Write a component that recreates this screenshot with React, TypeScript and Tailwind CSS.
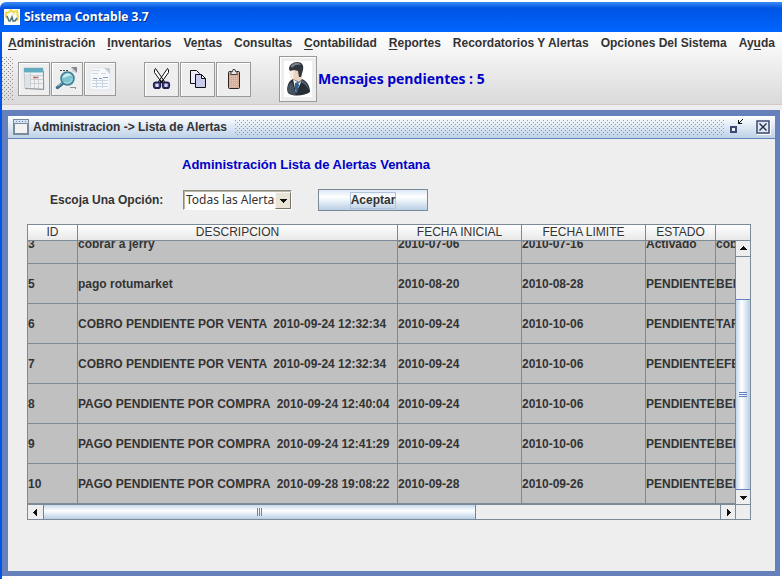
import type { ReactNode } from 'react'

const MENUS: [string, string, string][] = [
  ['', 'A', 'dministración'],
  ['', 'I', 'nventarios'],
  ['Ve', 'n', 'tas'],
  ['Consultas', '', ''],
  ['', 'C', 'ontabilidad'],
  ['', 'R', 'eportes'],
  ['Recordatorios Y Alertas', '', ''],
  ['Opciones Del Sistema', '', ''],
  ['Ay', 'u', 'da'],
]

const ROWS = [
  ['3', 'cobrar a jerry', '2010-07-06', '2010-07-16', 'Activado', 'cobro'],
  ['5', 'pago rotumarket', '2010-08-20', '2010-08-28', 'PENDIENTE', 'BENEF'],
  ['6', 'COBRO PENDIENTE POR VENTA  2010-09-24 12:32:34', '2010-09-24', '2010-10-06', 'PENDIENTE', 'TARJ'],
  ['7', 'COBRO PENDIENTE POR VENTA  2010-09-24 12:32:34', '2010-09-24', '2010-10-06', 'PENDIENTE', 'EFEC'],
  ['8', 'PAGO PENDIENTE POR COMPRA  2010-09-24 12:40:04', '2010-09-24', '2010-10-06', 'PENDIENTE', 'BENEF'],
  ['9', 'PAGO PENDIENTE POR COMPRA  2010-09-24 12:41:29', '2010-09-24', '2010-10-06', 'PENDIENTE', 'BENEF'],
  ['10', 'PAGO PENDIENTE POR COMPRA  2010-09-28 19:08:22', '2010-09-28', '2010-09-26', 'PENDIENTE', 'BENEF'],
]

function Dots({ id, color, className }: { id: string; color: string; className: string }) {
  return (
    <svg className={className} aria-hidden="true" shapeRendering="crispEdges">
      <defs>
        <pattern id={id} width="4" height="4" patternUnits="userSpaceOnUse">
          <rect width="1" height="1" fill={color} />
          <rect x="2" y="2" width="1" height="1" fill={color} />
        </pattern>
      </defs>
      <rect width="100%" height="100%" fill={`url(#${id})`} />
    </svg>
  )
}

function ToolButton({ label, size, children }: { label: string; size: 'small' | 'medium' | 'large'; children: ReactNode }) {
  const sizes = {
    small: 'h-[34px] w-8',
    medium: 'h-[35px] w-[35px]',
    large: 'h-[46px] w-[38px]',
  }
  return (
    <button
      type="button"
      aria-label={label}
      className={`flex shrink-0 items-center justify-center border border-[#999] bg-[#eee] shadow-[inset_1px_1px_0_#fff] ${sizes[size]}`}
    >
      {children}
    </button>
  )
}

function CalendarIcon() {
  return (
    <svg width="22" height="24" viewBox="0 0 22 24">
      <path d="M1 1l19 0 1 21-19-1z" fill="#eff1f2" stroke="#b4bbbf" strokeWidth="0.800" />
      <path d="M1 1h19v4H1z" fill="#62abc2" />
      <path d="M1 5h19v1H1z" fill="#a8d3df" />
      <path d="M2 7h5v13H2z" fill="#dde3e6" />
      <path d="M7.500 6v14M11.500 8v13M15.500 8v13M8 8.500h12M8 12.500h12M8 16.500h12" stroke="#c9cfd2" />
      <path d="M10 10.500h5" stroke="#d4604e" strokeWidth="1.500" />
      <path d="M2 21.500l19 1M20.500 4v18" stroke="#8f979b" />
    </svg>
  )
}

function SearchDocIcon() {
  return (
    <svg width="24" height="26" viewBox="0 0 24 26">
      <path d="M4 2h13l5 5v17H4z" fill="#eceff1" />
      <path d="M16 1h6v6z" fill="#84888b" />
      <path d="M16 1l1 5 5 1z" fill="#d4d8da" />
      <path d="M5 4.500h9" stroke="#3c4347" strokeDasharray="2 1" />
      <path d="M15 21.500h5M20.500 21v2" stroke="#8b9296" />
      <path d="M7.500 17.500l-5 4" stroke="#3b6f8a" strokeWidth="3.500" strokeLinecap="round" />
      <path d="M7 17l-4 3" stroke="#8fc0d3" strokeLinecap="round" />
      <circle cx="12.500" cy="12.500" r="6.500" fill="#7cc3d0" stroke="#467d91" strokeWidth="1.600" />
      <path d="M7.500 12c1-5 7-6 9.500-2-4-1-6 2-9.500 2z" fill="#c9edf0" />
      <path d="M9 16c3 2 7 1 8-3" stroke="#a9dfe5" fill="none" />
    </svg>
  )
}

function FormIcon() {
  return (
    <svg width="22" height="24" viewBox="0 0 22 24">
      <path d="M1 1h15l5 5v17H1z" fill="#f6f8fa" stroke="#e0e5ea" />
      <path d="M15 1h6v6z" fill="#c2cdd8" />
      <path d="M2 3.500h9M3 6.500h6M12 6.500h5" stroke="#cbd7e3" />
      <path d="M4 11.500h4M10 11.500h3M14 10.500h5" stroke="#7f9fc4" />
      <path d="M3 13.500h16M3 16.500h16M3 19.500h16M7.500 12v9M13.500 12v9" stroke="#c8d5e2" />
    </svg>
  )
}

function CutIcon() {
  return (
    <svg width="20" height="24" viewBox="0 0 20 24">
      <path d="M3.500 1.500L2.500 3v2.500L10 16l2.500-1.500zM15.500 1.500l1 1.500v2.500L9 16l-2.500-1.500z" fill="#fff" stroke="#111" />
      <path d="M7.500 13l3 3M11.500 13l-3 3" stroke="#111" strokeWidth="1.500" />
      <rect x="2" y="15.500" width="6" height="5.500" rx="2" fill="#d8d8ee" stroke="#1e1e50" strokeWidth="2.200" />
      <rect x="11" y="15.500" width="6" height="5.500" rx="2" fill="#d8d8ee" stroke="#1e1e50" strokeWidth="2.200" />
      <path d="M3 16v4M16 16v4M7 16v4M12 16v4" stroke="#6767ad" strokeWidth="0.700" />
    </svg>
  )
}

function CopyIcon() {
  return (
    <svg width="18" height="20" viewBox="0 0 18 20">
      <path d="M1.500 1.500h6l3 3v10h-9z" fill="#eef" stroke="#111" />
      <path d="M6.500 5.500h6l4 4v9h-10z" fill="#c9cbed" stroke="#111" />
      <path d="M12.500 5.500v4h4z" fill="#fff" stroke="#111" />
    </svg>
  )
}

function PasteIcon() {
  return (
    <svg width="14" height="22" viewBox="0 0 14 22">
      <rect x="1.500" y="3.500" width="11" height="17" rx="1" fill="#d5ad98" stroke="#2d221c" />
      <path d="M3 8.500h8M3 10.500h8M3 12.500h8M3 14.500h8M3 16.500h8M3 18.500h8" stroke="#e5cbbb" strokeDasharray="1 1" />
      <path d="M3.500 6.500l1-3h1L6 1.500h2l.5 2h1l1 3z" fill="#e6e6e6" stroke="#444" />
    </svg>
  )
}

function PersonIcon() {
  return (
    <svg width="28" height="36" viewBox="0 0 28 36">
      <rect width="28" height="36" fill="#fff" />
      <path d="M6 8c-1 4 0 9 3 11l6 3 3-6 0-9-6-3z" fill="#ead3c1" />
      <path d="M6 9c-1 4 1 9 3 10 1-3 0-7 1-10z" fill="#f7ebe2" />
      <path d="M5 8C5 4 9 1 13 1c5 0 7 3 6 8l-2 7-2 0-1-6-4-1-4 1z" fill="#30363c" />
      <path d="M7 5c3-4 8-4 10-1-4-1-7 0-9 3z" fill="#7a838b" />
      <path d="M4 32c-2-5 0-12 5-14l6 3 3-3c5 2 8 7 8 13-5 4-17 5-22 1z" fill="#252d35" />
      <path d="M4 31c-1-5 1-9 4-10l4 13c-3 0-6-1-8-3z" fill="#46525e" />
      <path d="M18 19c4 2 6 6 7 10-2-3-4-6-7-7z" fill="#53606c" />
      <path d="M9 18l3 14 6-13-3 3z" fill="#edf2f6" />
      <path d="M11 22l3-1 1 3-2 8-2-4z" fill="#2f5f95" />
    </svg>
  )
}

function Arrow({ dir }: { dir: 'up' | 'down' | 'left' | 'right' }) {
  const d = {
    up: 'M4 2h1v1h1v1h1v1h1v1H1V5h1V4h1V3h1z',
    down: 'M1 3h7v1H7v1H6v1H5v1H4V6H3V5H2V4H1z',
    left: 'M2 4h1V3h1V2h1V1h1v7H5V7H4V6H3V5H2z',
    right: 'M7 4H6V3H5V2H4V1H3v7h1V7h1V6h1V5h1z',
  }
  return (
    <svg width="9" height="9" viewBox="0 0 9 9" shapeRendering="crispEdges">
      <path d={d[dir]} fill="#111" />
    </svg>
  )
}

function Columns() {
  return (
    <colgroup>
      <col className="w-[50px]" />
      <col className="w-80" />
      <col className="w-[124px]" />
      <col className="w-[124px]" />
      <col className="w-[70px]" />
      <col />
    </colgroup>
  )
}

function AlertsTable() {
  return (
    <div className="mr-6 ml-[19px] border border-[#7a8a99]">
      <table className="h-[15px] w-full table-fixed border-separate border-spacing-0 text-xs leading-[15px]">
        <Columns />
        <thead>
          <tr>
            {['ID', 'DESCRIPCION', 'FECHA INICIAL', 'FECHA LIMITE', 'ESTADO', ''].map((h, i) => (
              <th
                key={i}
                scope="col"
                className="h-[15px] overflow-hidden border-r border-[#7a8a99] bg-linear-to-b from-white to-[#e8e8e8] p-0 font-normal whitespace-nowrap last:border-r-0"
              >
                {h}
              </th>
            ))}
          </tr>
        </thead>
      </table>
      <div className="flex border-t border-[#7a8a99]">
        <div className="flex h-[263px] min-w-0 flex-1 flex-col justify-end overflow-hidden bg-[#c0c0c0]">
          <table className="w-full shrink-0 table-fixed border-separate border-spacing-0 text-xs font-bold">
            <Columns />
            <tbody>
              {ROWS.map((row) => (
                <tr key={row[0]}>
                  {row.map((cell, i) => (
                    <td
                      key={i}
                      className="h-10 overflow-hidden border-r border-b border-[#7a8a99] p-0 whitespace-pre last:border-r-0"
                    >
                      {cell}
                    </td>
                  ))}
                </tr>
              ))}
            </tbody>
          </table>
        </div>
        <div className="flex w-[15px] flex-col border-l border-[#7a8a99] bg-[#eee]">
          <button type="button" aria-label="Subir" className="flex h-4 items-center justify-center border-b border-[#7a8a99]">
            <Arrow dir="up" />
          </button>
          <div className="flex flex-1 flex-col justify-end">
            <div className="flex h-[82%] flex-col items-center justify-center gap-px border-y border-[#6382bf] bg-linear-to-r from-[#c4d8ec] via-white via-40% to-[#b8cfe5]">
              <span className="h-px w-2 bg-[#6382bf]" />
              <span className="h-px w-2 bg-[#6382bf]" />
              <span className="h-px w-2 bg-[#6382bf]" />
            </div>
          </div>
          <button type="button" aria-label="Bajar" className="flex h-[14px] items-center justify-center">
            <Arrow dir="down" />
          </button>
        </div>
      </div>
      <div className="flex h-[15px] border-t border-[#7a8a99] bg-[#eee]">
        <button type="button" aria-label="Izquierda" className="flex w-[15px] items-center justify-center">
          <Arrow dir="left" />
        </button>
        <div className="flex flex-1">
          <div className="flex w-[64%] items-center justify-center gap-px border-x border-[#6382bf] bg-linear-to-b from-[#c4d8ec] via-white via-40% to-[#b8cfe5]">
            <span className="h-2 w-px bg-[#6382bf]" />
            <span className="h-2 w-px bg-[#6382bf]" />
            <span className="h-2 w-px bg-[#6382bf]" />
          </div>
        </div>
        <button type="button" aria-label="Derecha" className="flex w-4 items-center justify-center border-x border-[#7a8a99]">
          <Arrow dir="right" />
        </button>
        <div className="w-[14px]" />
      </div>
    </div>
  )
}

export default function App() {
  return (
    <div className="flex min-h-screen flex-col bg-white pt-0.5 font-['Liberation_Sans',Arial,sans-serif] text-xs text-[#333]">
      <header className="flex h-[30px] items-center gap-1 rounded-tl-md bg-linear-to-b from-[#3c8cf4] via-[#0054e3] via-20% to-[#0066ff] px-1">
        <svg width="16" height="16" viewBox="0 0 16 16" aria-hidden="true">
          <rect width="16" height="16" fill="#fbfbf3" />
          <path d="M2 9V4l3-1 2-2 2 2 4-1 1 7-1 3" fill="none" stroke="#e9da4a" strokeWidth="2" />
          <path d="M3 7l2 5h1l2-4 1 4h2l2-3" fill="none" stroke="#4c7780" strokeWidth="1.500" />
          <path d="M9 5l2-1" stroke="#f2ea9a" strokeWidth="2" />
        </svg>
        <h1 className="font-['Open_Sans',sans-serif] text-xs font-bold text-white [text-shadow:1px_1px_0_#0a2d80]">
          Sistema Contable 3.7
        </h1>
      </header>

      <div className="flex flex-1 flex-col border-l-2 border-[#0055e5]">
        <div className="border-b border-[#d5c9c4] bg-linear-to-b from-white to-[#dadada]">
          <nav className="flex h-[22px] items-center gap-3 overflow-hidden px-1.5 font-bold whitespace-nowrap">
            {MENUS.map(([pre, key, post]) => (
              <button type="button" key={pre + key + post}>
                {pre}
                <span className="underline underline-offset-2">{key}</span>
                {post}
              </button>
            ))}
          </nav>
          <div className="flex h-[50px] items-center">
            <Dots id="grip" color="#8d8d8d" className="h-11 w-3" />
            <div className="ml-1 flex gap-px">
              <ToolButton label="Calendario" size="small"><CalendarIcon /></ToolButton>
              <ToolButton label="Buscar" size="small"><SearchDocIcon /></ToolButton>
              <ToolButton label="Formulario" size="small"><FormIcon /></ToolButton>
            </div>
            <div className="ml-7 flex gap-px">
              <ToolButton label="Cortar" size="medium"><CutIcon /></ToolButton>
              <ToolButton label="Copiar" size="medium"><CopyIcon /></ToolButton>
              <ToolButton label="Pegar" size="medium"><PasteIcon /></ToolButton>
            </div>
            <div className="ml-7 flex items-center gap-px">
              <ToolButton label="Usuario" size="large"><PersonIcon /></ToolButton>
              <p className="font-['Open_Sans',sans-serif] text-sm font-bold text-[#0000c8]">Mensajes pendientes : 5</p>
            </div>
          </div>
        </div>

        <div className="h-[5px] bg-[#eeedf0]" />

        <main className="mr-0.5 mb-[3px] flex flex-1 flex-col border-6 border-b-5 border-r-5 border-[#6680bb] bg-[#eee]">
          <div className="flex h-[23px] items-center border-b border-[#6382bf] bg-linear-to-b from-white to-[#bdd2e8] pr-1 pl-[5px]">
            <svg width="16" height="16" viewBox="0 0 16 16" aria-hidden="true" shapeRendering="crispEdges">
              <rect x="1" y="1" width="14" height="14" fill="#f2f2f2" stroke="#7a8a99" strokeWidth="2" />
              <rect x="1" y="1" width="14" height="3" fill="#d5e3f2" />
              <path d="M3 2.500h1M6 2.500h1M9 2.500h1M12 2.500h1" stroke="#6382bf" />
              <path d="M1 4.500h14" stroke="#7a8a99" />
            </svg>
            <h2 className="ml-1 font-bold">Administracion -&gt; Lista de Alertas</h2>
            <Dots id="drag" color="#8499b8" className="ml-2 h-[15px] min-w-0 flex-1" />
            <button type="button" aria-label="Restaurar" className="ml-1">
              <svg width="16" height="18" viewBox="0 0 16 18" shapeRendering="crispEdges">
                <rect x="3" y="9" width="5" height="5" fill="#e8f0f8" stroke="#3c4a72" strokeWidth="2" />
                <path d="M10 2h1v3h3v1h-4zM11 4h1V3h1V2h1V1h1v1h-1v1h-1v1h-1v1h-1z" fill="#111" />
              </svg>
            </button>
            <button type="button" aria-label="Cerrar" className="ml-3">
              <svg width="15" height="15" viewBox="0 0 15 15">
                <rect x="1" y="1" width="12" height="12" fill="#dfe9f4" stroke="#3c4a72" strokeWidth="1.500" />
                <path d="M3.500 3.500l7 7M10.500 3.500l-7 7" stroke="#222c48" strokeWidth="1.300" />
                <path d="M14.500 1v13.500H1" fill="none" stroke="#fff" />
              </svg>
            </button>
          </div>

          <h3 className="mt-[18px] ml-[174px] text-[13px] leading-4 font-bold text-[#0000c8]">
            Administración Lista de Alertas Ventana
          </h3>

          <form className="mt-4 mb-[13px] ml-[42px] flex items-center" onSubmit={(e) => e.preventDefault()}>
            <label htmlFor="opcion" className="w-[133px] font-bold">
              Escoja Una Opción:
            </label>
            <div className="relative h-5 w-[109px]">
              <select
                id="opcion"
                className="h-5 w-full appearance-none rounded-none border border-[#8c8a7c] border-r-white border-b-white bg-white pl-0.5 font-['Noto_Sans',sans-serif] text-xs shadow-[inset_1px_1px_0_#b8b6a8] outline-none"
              >
                <option>Todas las Alertas</option>
              </select>
              <span className="pointer-events-none absolute top-0.5 right-px flex h-[17px] w-4 items-center justify-center border border-[#f8f6ee] border-r-[#777468] border-b-[#777468] bg-[#e8e4d8]">
                <Arrow dir="down" />
              </span>
            </div>
            <button
              type="submit"
              className="ml-[26px] flex h-[22px] w-[110px] items-center justify-center border border-[#7a8a99] bg-linear-to-b from-[#dce8f4] via-white via-35% to-[#b8cfe5] font-bold"
            >
              <span className="border border-[#b0c4dc] leading-[15px]">Aceptar</span>
            </button>
          </form>

          <AlertsTable />
        </main>
      </div>
    </div>
  )
}
